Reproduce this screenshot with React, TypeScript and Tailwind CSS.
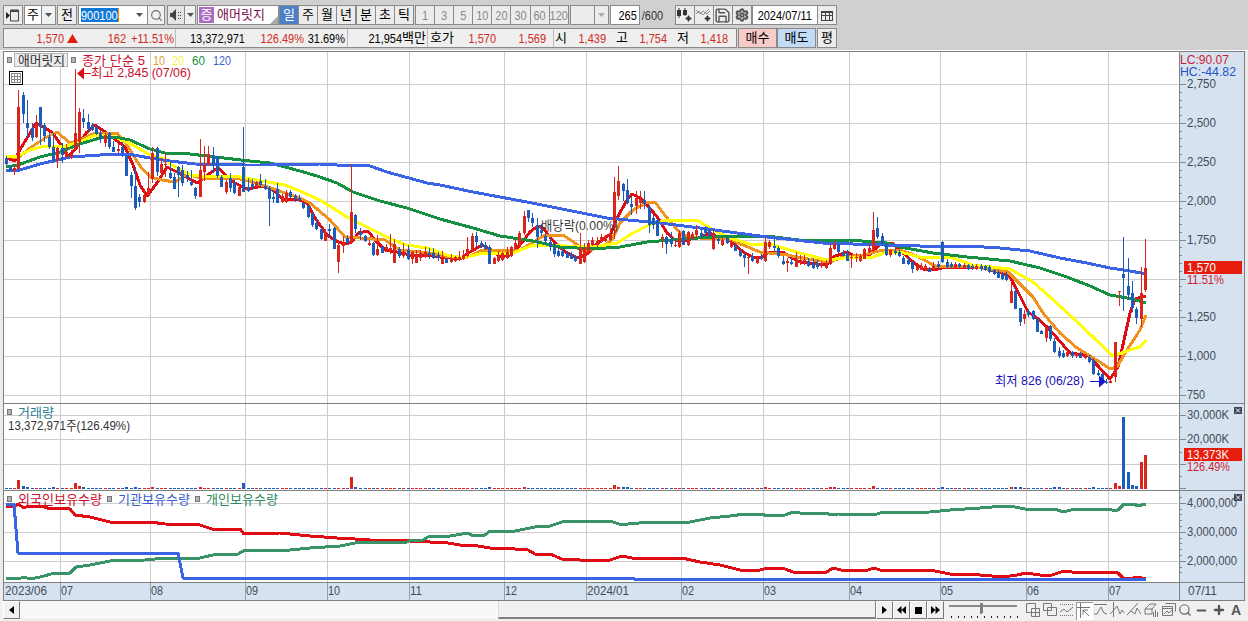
import type { ReactNode } from 'react';
import { Search, Save, Settings, Minus, Plus } from 'lucide-react';

// [x, high, bodyTop, bodyBottom, low]
type Candle = [number, number, number, number, number];

const RED = '#d8261c';
const BLUE = '#1c5cba';
const AXIS = '#434b57';

const up: Candle[] = [
  [14, 166, 168, 171, 175], [18, 90, 107, 169, 170], [36, 115, 125, 137, 138], [57, 147, 148, 161, 168],
  [66, 144, 152, 157, 158], [71, 150, 153, 157, 159], [75, 69, 133, 147, 150], [79, 108, 112, 142, 153],
  [105, 133, 135, 143, 147], [118, 144, 149, 151, 153], [144, 190, 195, 202, 203], [148, 172, 188, 196, 197],
  [152, 147, 153, 179, 183], [161, 158, 164, 173, 177], [165, 153, 164, 165, 177], [200, 139, 170, 197, 197],
  [204, 146, 165, 172, 181], [208, 146, 154, 165, 166], [226, 180, 182, 192, 194], [239, 185, 187, 196, 196],
  [256, 181, 182, 187, 188], [282, 194, 196, 202, 203], [286, 190, 193, 202, 203], [325, 229, 232, 241, 241],
  [338, 240, 245, 262, 273], [343, 236, 243, 246, 253], [351, 164, 212, 243, 243], [369, 240, 243, 245, 246],
  [377, 235, 249, 255, 256], [386, 244, 247, 250, 252], [390, 234, 248, 251, 254], [394, 239, 244, 263, 263],
  [403, 243, 254, 256, 258], [412, 251, 252, 259, 264], [416, 250, 255, 263, 263], [420, 250, 253, 258, 261],
  [425, 247, 252, 257, 258], [442, 251, 259, 264, 264], [451, 254, 258, 262, 263], [455, 256, 257, 261, 262],
  [459, 251, 257, 260, 261], [463, 250, 255, 259, 260], [467, 237, 249, 256, 257], [472, 233, 236, 250, 252],
  [494, 257, 258, 264, 264], [498, 251, 256, 261, 262], [502, 252, 253, 260, 261], [507, 247, 252, 258, 259],
  [511, 246, 247, 256, 257], [515, 239, 243, 249, 250], [519, 231, 233, 247, 248], [524, 211, 216, 233, 235],
  [580, 233, 248, 264, 264], [584, 243, 248, 262, 263], [588, 240, 243, 253, 254], [592, 237, 240, 245, 246],
  [597, 237, 241, 245, 247], [601, 234, 237, 242, 243], [605, 235, 236, 241, 242], [610, 230, 234, 240, 241],
  [614, 177, 192, 228, 239], [618, 166, 181, 196, 200], [636, 191, 198, 206, 214], [640, 191, 200, 203, 209],
  [662, 234, 237, 239, 248], [675, 240, 245, 246, 247], [679, 230, 233, 247, 248], [688, 231, 232, 245, 246],
  [692, 232, 234, 239, 240], [696, 225, 230, 235, 238], [713, 230, 233, 249, 250], [722, 238, 240, 245, 246],
  [731, 240, 242, 247, 248], [748, 255, 257, 258, 274], [757, 256, 258, 263, 264], [765, 237, 242, 261, 262],
  [769, 240, 242, 247, 249], [787, 258, 261, 263, 272], [796, 252, 259, 267, 267], [800, 255, 260, 263, 265],
  [804, 255, 260, 263, 265], [821, 262, 263, 266, 268], [826, 260, 263, 268, 269], [830, 244, 248, 264, 265],
  [834, 241, 244, 249, 250], [851, 255, 257, 258, 268], [856, 253, 257, 258, 262], [860, 254, 256, 261, 262],
  [864, 248, 249, 259, 259], [869, 244, 248, 252, 253], [873, 212, 230, 251, 252], [890, 249, 250, 255, 257],
  [917, 264, 266, 270, 271], [921, 263, 266, 270, 270], [925, 264, 266, 270, 271], [933, 262, 266, 269, 270],
  [955, 262, 264, 268, 269], [964, 263, 265, 268, 269], [976, 264, 266, 269, 270], [1011, 283, 291, 303, 303],
  [1024, 310, 314, 319, 324], [1046, 326, 328, 338, 342], [1067, 350, 352, 356, 357], [1076, 352, 354, 356, 358],
  [1085, 354, 355, 358, 359], [1110, 377, 381, 383, 383], [1115, 342, 342, 377, 382], [1119, 291, 291, 292, 306],
  [1141, 267, 293, 319, 327], [1145, 239, 268, 290, 292],
];

const down: Candle[] = [
  [6, 156, 158, 164, 165], [10, 165, 167, 171, 171], [23, 92, 95, 114, 123], [27, 100, 123, 128, 137],
  [32, 123, 128, 138, 141], [40, 107, 107, 127, 145], [44, 123, 125, 136, 142], [49, 133, 137, 147, 149],
  [53, 133, 147, 161, 163], [62, 143, 148, 155, 163], [83, 109, 118, 122, 128], [88, 114, 122, 129, 132],
  [92, 123, 125, 130, 131], [96, 126, 127, 134, 135], [100, 130, 133, 139, 143], [109, 132, 133, 147, 149],
  [113, 141, 147, 152, 152], [122, 142, 147, 153, 157], [126, 156, 156, 176, 176], [131, 172, 175, 186, 198],
  [135, 167, 186, 208, 210], [139, 194, 197, 202, 207], [157, 147, 148, 172, 176], [170, 163, 173, 178, 179],
  [174, 173, 177, 189, 189], [178, 166, 167, 175, 197], [182, 165, 170, 183, 186], [187, 171, 175, 178, 182],
  [191, 170, 182, 185, 186], [195, 187, 188, 196, 199], [213, 147, 155, 165, 173], [217, 156, 156, 176, 178],
  [221, 175, 177, 187, 187], [230, 173, 178, 188, 192], [234, 180, 183, 193, 194], [243, 127, 167, 192, 192],
  [248, 178, 187, 191, 192], [252, 179, 184, 187, 190], [260, 174, 181, 185, 187], [265, 179, 186, 189, 190],
  [269, 186, 188, 199, 226], [273, 190, 197, 199, 203], [277, 183, 189, 203, 203], [290, 190, 192, 197, 198],
  [295, 194, 196, 199, 202], [299, 195, 198, 200, 202], [303, 202, 203, 208, 209], [308, 204, 206, 217, 218],
  [312, 212, 214, 225, 227], [316, 217, 223, 229, 230], [321, 228, 229, 239, 240], [329, 224, 229, 231, 238],
  [334, 227, 228, 249, 249], [347, 235, 238, 243, 244], [355, 214, 215, 229, 233], [360, 228, 232, 235, 240],
  [365, 235, 236, 241, 242], [373, 242, 243, 255, 256], [382, 245, 247, 253, 253], [399, 247, 249, 256, 258],
  [408, 245, 250, 259, 260], [429, 248, 253, 255, 259], [433, 248, 253, 258, 259], [438, 252, 255, 258, 261],
  [446, 258, 259, 263, 263], [476, 232, 236, 242, 247], [481, 241, 243, 247, 248], [485, 242, 245, 249, 250],
  [489, 245, 247, 264, 264], [528, 210, 210, 218, 222], [532, 213, 218, 223, 227], [537, 218, 225, 237, 248],
  [541, 224, 230, 233, 236], [545, 233, 236, 241, 244], [550, 237, 242, 247, 251], [554, 243, 247, 254, 257],
  [558, 248, 251, 256, 257], [562, 248, 251, 256, 257], [567, 251, 253, 258, 258], [571, 252, 254, 259, 259],
  [575, 255, 256, 261, 262], [623, 183, 184, 191, 201], [627, 179, 190, 203, 204], [631, 196, 204, 207, 215],
  [644, 191, 200, 204, 209], [649, 205, 207, 225, 233], [653, 215, 218, 225, 229], [657, 219, 220, 236, 236],
  [666, 236, 237, 244, 254], [671, 232, 239, 244, 247], [683, 230, 231, 245, 245], [701, 228, 233, 237, 238],
  [705, 226, 229, 233, 236], [709, 229, 231, 236, 237], [718, 237, 239, 241, 244], [727, 236, 238, 243, 244],
  [735, 243, 246, 251, 251], [740, 249, 251, 256, 257], [744, 253, 255, 258, 267], [752, 253, 256, 261, 262],
  [761, 254, 257, 259, 260], [774, 239, 246, 248, 252], [778, 246, 248, 256, 258], [783, 256, 261, 264, 265],
  [791, 257, 262, 264, 265], [808, 258, 261, 266, 267], [813, 258, 263, 268, 269], [817, 260, 263, 267, 269],
  [838, 243, 244, 252, 253], [843, 250, 253, 256, 256], [847, 250, 253, 261, 261], [877, 217, 228, 237, 239],
  [882, 233, 236, 244, 245], [886, 243, 244, 255, 256], [895, 248, 251, 253, 255], [899, 250, 252, 256, 257],
  [903, 256, 258, 264, 264], [908, 257, 260, 264, 265], [912, 261, 262, 269, 273], [929, 267, 269, 272, 272],
  [938, 261, 264, 267, 269], [942, 241, 242, 262, 263], [947, 259, 262, 267, 269], [951, 262, 264, 267, 268],
  [959, 263, 264, 267, 268], [968, 264, 265, 269, 270], [972, 264, 266, 268, 270], [981, 264, 266, 269, 271],
  [985, 265, 266, 270, 271], [989, 265, 267, 272, 273], [994, 269, 270, 274, 275], [998, 270, 272, 278, 278],
  [1002, 272, 274, 279, 280], [1006, 272, 275, 280, 281], [1015, 288, 291, 309, 309], [1020, 308, 308, 322, 326],
  [1028, 309, 311, 315, 317], [1033, 310, 311, 319, 320], [1037, 318, 319, 332, 332], [1041, 330, 331, 334, 334],
  [1050, 325, 326, 339, 341], [1054, 338, 341, 352, 353], [1059, 347, 351, 356, 358], [1063, 350, 353, 357, 358],
  [1072, 351, 352, 356, 358], [1080, 352, 354, 358, 358], [1089, 355, 357, 362, 363], [1093, 358, 360, 374, 375],
  [1098, 370, 373, 375, 376], [1102, 373, 374, 383, 383], [1106, 379, 382, 383, 384], [1123, 237, 274, 278, 311],
  [1128, 258, 286, 295, 300], [1132, 281, 293, 308, 312], [1136, 307, 309, 318, 324],
];

const ma5 =
  '6,158 15,161 18,153 27,138 36,123 45,128 53,133 62,147 68,157 77,147 86,133 95,125 107,133 125,147 133,165 140,185 147,196 157,183 167,167 177,172 197,183 210,173 218,168 233,182 247,189 263,186 273,190 283,199 300,200 307,203 315,218 327,235 338,242 345,244 352,242 358,233 368,231 375,240 385,250 397,252 410,255 425,255 440,257 460,259 470,252 482,245 490,249 500,257 510,255 520,245 530,232 538,226 543,228 555,243 567,253 578,258 587,254 600,241 611,234 616,220 627,200 632,194 640,198 648,206 658,218 667,233 675,240 687,240 700,237 710,233 717,237 730,240 743,252 753,257 763,257 768,252 783,252 790,257 800,262 817,264 827,264 833,257 847,252 857,257 867,257 877,247 883,243 892,243 903,253 913,262 923,269 933,270 947,267 983,268 1003,273 1010,277 1017,290 1028,312 1037,318 1047,327 1057,338 1070,353 1090,356 1097,365 1110,379 1118,367 1130,313 1135,299 1146,296';
const ma10 =
  '6,156 18,158 30,148 45,138 57,132 70,143 80,140 95,133 117,133 127,145 140,166 150,177 162,180 175,182 187,174 200,178 235,178 245,180 265,186 285,193 300,198 310,203 330,220 345,237 360,238 385,240 400,250 430,253 450,257 468,257 482,250 500,251 520,250 535,241 545,235 563,235 575,243 583,251 600,248 612,240 620,223 633,210 648,202 655,202 667,218 682,235 700,238 727,238 743,245 760,252 787,255 813,260 830,262 843,257 863,255 883,250 900,250 917,256 937,267 967,266 1008,272 1033,297 1043,313 1060,333 1077,348 1100,362 1110,369 1117,367 1127,350 1140,330 1146,315';
const ma20 =
  '6,157 18,156 30,150 45,146 62,147 80,142 95,135 115,137 133,145 150,155 165,159 175,167 190,175 210,177 235,176 262,181 285,185 300,191 320,200 347,217 367,227 393,240 407,245 427,248 447,255 463,258 483,253 513,253 533,245 553,245 577,247 600,246 617,243 633,233 647,226 667,220 697,220 713,230 733,239 750,244 770,244 800,253 827,260 853,257 870,258 887,252 900,252 920,257 950,257 973,265 1010,269 1033,282 1050,297 1073,318 1093,337 1113,356 1130,350 1140,347 1146,340';
const ma60 =
  '6,167 18,165 40,157 60,152 80,144 100,138 115,137 130,140 150,149 165,153 190,154 215,157 250,161 270,163 285,167 300,171 317,176 337,183 353,192 380,201 407,208 440,219 473,228 500,236 533,241 560,247 593,249 620,247 647,242 683,239 727,236 767,236 807,241 850,240 887,243 900,247 933,253 967,257 1010,261 1040,268 1067,277 1090,286 1110,295 1133,299 1146,303';
const ma120 =
  '6,171 20,170 40,164 70,157 100,155 128,154 150,158 170,161 195,164 245,165 265,165 320,164 337,165 370,166 387,172 427,183 440,185 473,192 527,202 567,210 607,218 660,223 700,228 767,237 823,243 883,245 920,246 967,246 1000,248 1030,251 1060,258 1087,263 1110,268 1130,271 1146,274';

const foreign =
  '6,506 14,507 18,504 24,508 28,506 42,506 50,509 62,508 70,509 75,515 90,517 110,522 150,522 165,524 200,525 212,529 240,529 244,534 280,533 310,536 337,538 355,539 370,540 410,541 430,542 448,543 460,545 472,545 490,548 515,549 528,550 535,554 550,554 562,559 580,560 610,560 622,556 632,558 650,559 665,558 682,558 700,562 720,565 740,570 760,570 768,568 785,569 793,572 825,573 833,568 845,571 868,570 874,568 880,570 910,571 930,570 940,572 950,574 980,575 1003,577 1017,575 1026,573 1040,575 1052,575 1064,571 1080,573 1100,572 1118,573 1123,578 1130,579 1137,577 1146,579';
const personal =
  '6,578 15,578 18,579 24,577 30,579 40,577 55,573 70,573 76,567 90,565 110,561 145,560 165,558 200,558 213,555 225,554 238,554 245,550 260,550 280,551 310,548 340,546 360,542 407,542 411,540 423,540 428,537 450,536 468,533 473,536 485,535 490,531 515,531 535,527 550,526 562,522 580,521 610,521 622,525 628,524 650,522 665,523 690,522 710,518 730,516 745,514 762,514 767,516 785,515 793,512 800,513 827,513 830,515 838,514 874,515 880,513 930,512 950,510 980,508 1005,506 1015,507 1025,509 1055,509 1063,512 1075,509 1085,510 1095,509 1112,510 1118,510 1124,504 1135,504 1137,506 1146,504';
const institution = '6,504 14,504 18,553 178,553 183,578 633,578 634,579 1146,579';

// top of the volume bars that rise above the base line, keyed by x
const volumeTop: Record<number, number> = {
  18: 480, 23: 486, 27: 487, 53: 487, 75: 483, 79: 486, 83: 487, 126: 487, 135: 487, 152: 487, 200: 487,
  243: 483, 351: 477, 355: 487, 489: 487, 524: 487, 614: 485, 618: 487, 623: 487, 627: 487, 765: 487,
  830: 487, 834: 487, 873: 486, 942: 487, 1011: 487, 1015: 487, 1020: 487, 1054: 487, 1059: 487, 1093: 487,
  1115: 483, 1119: 486, 1123: 417, 1128: 472, 1132: 485, 1136: 486, 1141: 462, 1145: 455,
};

const months = [
  { x: 60, label: '07' }, { x: 150, label: '08' }, { x: 245, label: '09' }, { x: 327, label: '10' },
  { x: 409, label: '11' }, { x: 504, label: '12' }, { x: 586, label: '2024/01' }, { x: 681, label: '02' },
  { x: 763, label: '03' }, { x: 849, label: '04' }, { x: 940, label: '05' }, { x: 1026, label: '06' },
  { x: 1108, label: '07' },
];

const prices = [
  { y: 84, label: '2,750' }, { y: 123, label: '2,500' }, { y: 162, label: '2,250' }, { y: 201, label: '2,000' },
  { y: 240, label: '1,750' }, { y: 279, label: '' }, { y: 317, label: '1,250' }, { y: 356, label: '1,000' },
  { y: 395, label: '750' },
];

function Label({ x, y, w, fill = AXIS, children }: { x: number; y: number; w: number; fill?: string; children: string }) {
  return (
    <text x={x} y={y} fill={fill} fontSize="13" textLength={w} lengthAdjust="spacingAndGlyphs">
      {children}
    </text>
  );
}

// toolbar digits: 6px wide, stretched to the height of the hangul beside them
function Num({ children }: { children: string }) {
  return <span className="inline-block scale-y-[1.22] text-[11px]">{children}</span>;
}

function Grid({ top, bottom, rows }: { top: number; bottom: number; rows: number[] }) {
  return (
    <g stroke="#cdcdcd" shapeRendering="crispEdges">
      {rows.map((y) => <path key={y} d={`M4 ${y + 0.5}H1178`} />)}
      {months.map((m) => <path key={m.x} d={`M${m.x + 0.5} ${top}V${bottom}`} />)}
    </g>
  );
}

function Marker({ x, y }: { x: number; y: number }) {
  return <rect x={x + 0.5} y={y + 0.5} width="4" height="5" fill="#b5b5b5" stroke="#777" shapeRendering="crispEdges" />;
}

function Candles({ data, color }: { data: Candle[]; color: string }) {
  return (
    <g fill={color} shapeRendering="crispEdges">
      {data.map(([x, hi, top, bottom, lo]) => (
        <g key={x}>
          <rect x={x} y={hi} width="1" height={lo - hi} />
          <rect x={x - 1} y={top} width="3" height={bottom - top} />
        </g>
      ))}
    </g>
  );
}

function Line({ points, color }: { points: string; color: string }) {
  return <polyline points={points} fill="none" stroke={color} strokeWidth="3" strokeLinejoin="round" shapeRendering="crispEdges" />;
}

function CloseBox({ y }: { y: number }) {
  return (
    <g>
      <rect x="1234" y={y} width="8" height="7" fill="#3f4856" />
      <path d={`M1236 ${y + 1.5}l4 4m0-4l-4 4`} stroke="#fff" />
    </g>
  );
}

function Panel({ top, height, plot, axis }: { top: number; height: number; plot: ReactNode; axis: ReactNode }) {
  return (
    <div className="flex border-b border-[#808080]">
      <svg className="block shrink-0 bg-white" width="1175" height={height} viewBox={`4 ${top} 1175 ${height}`}>
        {plot}
      </svg>
      <div className="w-[65px] border-l border-[#808080] bg-[#d6e2ef]">
        <svg className="block" width="64" height={height} viewBox={`1180 ${top} 64 ${height}`}>
          {axis}
        </svg>
      </div>
    </div>
  );
}

function PricePanel() {
  const minor: number[] = [];
  for (let i = 0; i < 40; i++) minor.push(Math.round(84 + i * 7.78));
  return (
    <Panel
      top={52}
      height={351}
      plot={
        <>
          <Grid top={52} bottom={403} rows={prices.map((p) => p.y)} />
          <Line points={ma5} color="#e00c14" />
          <Line points={ma10} color="#f0921c" />
          <Line points={ma20} color="#ffff00" />
          <Line points={ma60} color="#159040" />
          <Line points={ma120} color="#3a64e4" />
          <Candles data={up} color={RED} />
          <Candles data={down} color={BLUE} />

          <Marker x={7} y={57} />
          <rect x="14.5" y="53.5" width="53" height="13" fill="#ececec" stroke="#b4b4b4" shapeRendering="crispEdges" />
          <Label x={18} y={65} w={47} fill="#333">애머릿지</Label>
          <Marker x={71} y={57} />
          <Label x={82} y={65} w={63} fill="#c8102e">종가 단순 5</Label>
          <Label x={153} y={65} w={12} fill="#e0a030">10</Label>
          <Label x={172} y={65} w={12} fill="#f5f53c">20</Label>
          <Label x={192} y={65} w={13} fill="#159040">60</Label>
          <Label x={213} y={65} w={18} fill="#3a5fcc">120</Label>
          <path d="M77 73.5l7-6v12z" fill="#e00c14" />
          <path d="M83 73.5h8" stroke="#e00c14" />
          <Label x={91} y={77} w={100} fill="#c8102e">최고 2,845 (07/06)</Label>
          <g shapeRendering="crispEdges" fill="none">
            <rect x="9.5" y="71.5" width="13" height="13" fill="#fff" stroke="#000" />
            <path d="M11.5 73.5h9v9h-9zM11.5 76.5h9M11.5 79.5h9M14.5 73.5v9M17.5 73.5v9" stroke="#8a8a8a" />
          </g>
          <Label x={541} y={230} w={77} fill="#3c3c3c">배당락(0.00%)</Label>
          <Label x={995} y={385} w={89} fill="#1a12b8">최저 826 (06/28)</Label>
          <path d="M1090 381.5h10" stroke="#1a12d8" />
          <path d="M1106 381.5l-7-6v12z" fill="#1a12d8" />
        </>
      }
      axis={
        <>
          <g stroke="#808890" shapeRendering="crispEdges">
            {minor.map((y) => <path key={y} d={`M1180 ${y + 0.5}h2`} />)}
            {prices.map((p) => <path key={p.y} d={`M1180 ${p.y + 0.5}h6`} />)}
          </g>
          <Label x={1180} y={64} w={49} fill="#d01c30">LC:90.07</Label>
          <Label x={1180} y={76} w={56} fill="#2454c8">HC:-44.82</Label>
          {prices.filter((p) => p.label).map((p) => (
            <Label key={p.y} x={1187} y={p.y + 4} w={p.label === '750' ? 18 : 29}>{p.label}</Label>
          ))}
          <rect x="1184" y="261" width="58" height="13" fill="#e81c0c" />
          <Label x={1187} y={272} w={29} fill="#fff">1,570</Label>
          <Label x={1187} y={284} w={37} fill="#d01c30">11.51%</Label>
        </>
      }
    />
  );
}

function VolumePanel() {
  const bars = [...up.map((c) => ({ x: c[0], fill: RED })), ...down.map((c) => ({ x: c[0], fill: BLUE }))];
  return (
    <Panel
      top={404}
      height={86}
      plot={
        <>
          <Grid top={404} bottom={490} rows={[415, 439, 464]} />
          <g shapeRendering="crispEdges">
            {bars.map((b) => {
              const y = volumeTop[b.x] ?? 488;
              return <rect key={b.x} x={b.x - 1} y={y} width="3" height={489 - y} fill={b.fill} />;
            })}
          </g>
          <Marker x={7} y={409} />
          <Label x={18} y={417} w={36} fill="#2a8090">거래량</Label>
          <Label x={8} y={430} w={122} fill="#333">13,372,971주(126.49%)</Label>
        </>
      }
      axis={
        <>
          <g stroke="#808890" shapeRendering="crispEdges">
            <path d="M1180 415.5h6M1180 439.5h6M1180 464.5h6M1180 488.5h6M1180 427.5h2M1180 452.5h2M1180 476.5h2" />
          </g>
          <Label x={1187} y={419} w={42}>30,000K</Label>
          <Label x={1187} y={443} w={42}>20,000K</Label>
          <rect x="1184" y="448" width="58" height="13" fill="#e81c0c" />
          <Label x={1187} y={459} w={42} fill="#fff">13,373K</Label>
          <Label x={1187} y={471} w={43} fill="#d01c30">126.49%</Label>
          <CloseBox y={407} />
        </>
      }
    />
  );
}

function HoldingsPanel() {
  const minor: number[] = [];
  for (let y = 497; y < 578; y += 5.8) minor.push(Math.round(y));
  return (
    <Panel
      top={491}
      height={91}
      plot={
        <>
          <Grid top={491} bottom={582} rows={[503, 532, 561]} />
          <Marker x={7} y={496} />
          <Label x={18} y={504} w={84} fill="#c8102e">외국인보유수량</Label>
          <Marker x={107} y={496} />
          <Label x={118} y={504} w={72} fill="#3a5fcc">기관보유수량</Label>
          <Marker x={195} y={496} />
          <Label x={206} y={504} w={72} fill="#2f8a60">개인보유수량</Label>
          <Line points={foreign} color="#e00c14" />
          <Line points={personal} color="#3a9468" />
          <Line points={institution} color="#3a64e4" />
        </>
      }
      axis={
        <>
          <g stroke="#808890" shapeRendering="crispEdges">
            {minor.map((y) => <path key={y} d={`M1180 ${y + 0.5}h2`} />)}
            <path d="M1180 503.5h6M1180 532.5h6M1180 561.5h6" />
          </g>
          <Label x={1187} y={507} w={50}>4,000,000</Label>
          <Label x={1187} y={536} w={50}>3,000,000</Label>
          <Label x={1187} y={565} w={50}>2,000,000</Label>
          <CloseBox y={494} />
        </>
      }
    />
  );
}

function DateAxis() {
  return (
    <svg className="block bg-[#d6e2ef]" width="1240" height="17" viewBox="4 583 1240 17">
      <Label x={5} y={595} w={42}>2023/06</Label>
      {months.map((m) => (
        <g key={m.x}>
          <path d={`M${m.x + 0.5} 583v17`} stroke="#9a9fa8" shapeRendering="crispEdges" />
          <Label x={m.x + 1} y={595} w={m.label.length > 2 ? 42 : 12}>{m.label}</Label>
        </g>
      ))}
      <path d="M1179.5 583v17" stroke="#808080" shapeRendering="crispEdges" />
      <Label x={1188} y={595} w={29}>07/11</Label>
    </svg>
  );
}

const box = 'flex h-5 shrink-0 items-center justify-center border border-[#8a8a8a]';

function Caret({ color = '#555' }: { color?: string }) {
  return <svg className="shrink-0" width="7" height="4" viewBox="0 0 7 4"><path d="M0 0h7L3.5 4z" fill={color} /></svg>;
}

function Toolbar() {
  return (
    <div className="flex h-5 pl-[3px] text-[13px] leading-[18px] text-black">
      <div className={`${box} w-5 bg-[#ececec]`}>
        <svg width="14" height="13" viewBox="0 0 14 13" fill="none" stroke="#444">
          <path d="M4.500 1v11h8v-11z" /><path d="M4 2h9" strokeWidth="2" /><path d="M0 3l4 3.500-4 3.500z" fill="#222" stroke="none" />
        </svg>
      </div>
      <div className={`${box} ml-px w-[18px] bg-white`}>주</div>
      <div className={`${box} -ml-px w-[15px] bg-[#f0f0f0]`}><Caret /></div>
      <div className={`${box} ml-px w-5 bg-[#ececec]`}>전</div>
      <div className={`${box} ml-px w-[70px] !justify-between bg-white pr-1 pl-0.5`}>
        <span className="flex h-[14px] w-[38px] items-center border-r border-orange-400 bg-[#0f78d4] text-white"><Num>900100</Num></span>
        <Caret />
      </div>
      <div className={`${box} -ml-px w-[18px] bg-[#f0f0f0]`}><Search size={13} color="#666" /></div>
      <div className={`${box} ml-0.5 w-[18px] bg-[#e4e4e4]`}>
        <svg width="13" height="12" viewBox="0 0 13 12" fill="#444">
          <path d="M0 4h2l4-4v12L2 8H0z" /><path d="M8 3h1v1H8zM8 6h1v1H8zM8 9h1v1H8zM10 3h1v1h-1zM10 6h1v1h-1zM10 9h1v1h-1z" />
        </svg>
      </div>
      <div className={`${box} -ml-px w-3 bg-[#f0f0f0]`}><Caret /></div>
      <div className={`${box} relative ml-px w-[82px] !justify-start bg-white pl-px`}>
        <span className="h-4 w-[15px] bg-[#ad6cc4] text-center leading-4 text-white">증</span>
        <span className="ml-[3px] text-[#7a1050]">애머릿지</span>
        <svg className="absolute right-0 bottom-0" width="8" height="8"><path d="M8 0v8H0z" fill="#aaa" /></svg>
      </div>
      <div className={`${box} w-5 bg-[#4b7fc8] text-white`}>일</div>
      {['주', '월', '년'].map((t) => <div key={t} className={`${box} -ml-px w-5 bg-[#ececec]`}>{t}</div>)}
      <div className={`${box} w-5 bg-[#ececec]`}>분</div>
      {['초', '틱'].map((t) => <div key={t} className={`${box} -ml-px w-5 bg-[#ececec]`}>{t}</div>)}
      <div className="ml-px flex">
        {['1', '3', '5', '10', '20', '30', '60', '120'].map((t) => (
          <div key={t} className={`${box} -mr-px w-[20.100px] bg-[#ececec] text-[#888]`}><Num>{t}</Num></div>
        ))}
      </div>
      <div className={`${box} ml-0.5 w-[25px] bg-[#ececec]`} />
      <div className={`${box} -ml-px w-[15px] bg-[#ececec]`}><Caret color="#aaa" /></div>
      <div className={`${box} ml-px w-[30px] !justify-end bg-white pr-0.5`}><Num>265</Num></div>
      <div className="w-[35px] pl-0.5 leading-5 text-[#333]"><Num>/600</Num></div>
      <div className={`${box} w-5 bg-[#ececec]`}>
        <svg width="15" height="14" viewBox="0 0 15 14" fill="#333">
          <path d="M0 2h4v6H0zM1.500 0h1v10h-1zM6 2h4v5H6zM7.500 0h1v8h-1z" /><path d="M9 10h2V8h1v2h2v1h-2v2h-1v-2H9z" stroke="#333" />
        </svg>
      </div>
      <div className={`${box} -ml-px w-5 bg-[#ececec]`}>
        <svg width="15" height="14" viewBox="0 0 15 14" fill="none" stroke="#777">
          <path d="M0 6l3-3 4 4 6-6M0 2l4 4 3-3 4 3 3-3" strokeWidth=".8" /><path d="M9 10h2V8h1v2h2v1h-2v2h-1v-2H9z" fill="#333" stroke="#333" />
        </svg>
      </div>
      <div className={`${box} -ml-px w-5 bg-[#ececec]`}>
        <Save size={17} color="#555" strokeWidth={2} />
      </div>
      <div className={`${box} -ml-px w-5 bg-[#ececec]`}><Settings size={14} color="#555" strokeWidth={3.5} /></div>
      <div className={`${box} w-[66px] bg-white`}><Num>2024/07/11</Num></div>
      <div className={`${box} -ml-px w-5 bg-[#ececec]`}>
        <svg width="12" height="11" viewBox="0 0 12 11" fill="none" stroke="#444" shapeRendering="crispEdges">
          <path d="M.5 1.500h11v9H.5zM.5 5.500h11M4.500 2v8M8.500 2v8" /><path d="M0 2h12" strokeWidth="2" />
        </svg>
      </div>
    </div>
  );
}

function QuoteBar() {
  const num = 'shrink-0 text-right';
  return (
    <div className="mt-[3px] flex h-5 pl-[3px] text-[13px] leading-[18px] text-black">
      <div className="flex w-[734px] shrink-0 border border-[#8a8a8a] bg-[#efefef]">
        <div className="flex w-[172px] shrink-0 items-center border-r border-[#bbb] text-[#d02a24]">
          <span className={`${num} w-[60px]`}><Num>1,570</Num></span>
          <svg className="ml-[3px]" width="11" height="9"><path d="M5.500 0L11 9H0z" fill="#e0200c" /></svg>
          <span className={`${num} w-[48px]`}><Num>162</Num></span>
          <span className={`${num} w-[48px]`}><Num>+11.51%</Num></span>
        </div>
        <div className="flex w-[172px] shrink-0 border-r border-[#bbb]">
          <span className={`${num} w-[69px]`}><Num>13,372,971</Num></span>
          <span className={`${num} w-[59px] text-[#d02a24]`}><Num>126.49%</Num></span>
          <span className={`${num} w-[41px]`}><Num>31.69%</Num></span>
        </div>
        <div className={`${num} w-[80px] border-r border-[#bbb] pr-px`}><Num>21,954</Num>백만</div>
        <div className="flex w-[126px] shrink-0 border-r border-[#bbb] text-[#d02a24]">
          <span className="w-[26px] pl-[2px] text-black">호가</span>
          <span className={`${num} w-[42px]`}><Num>1,570</Num></span>
          <span className={`${num} w-[50px]`}><Num>1,569</Num></span>
        </div>
        <div className="flex shrink-0 text-[#d02a24]">
          <span className="w-[14px] pl-px text-black">시</span>
          <span className={`${num} w-[38px]`}><Num>1,439</Num></span>
          <span className={`${num} w-[22px] text-black`}>고</span>
          <span className={`${num} w-[39px]`}><Num>1,754</Num></span>
          <span className={`${num} w-[22px] text-black`}>저</span>
          <span className={`${num} w-[39px]`}><Num>1,418</Num></span>
        </div>
      </div>
      <div className={`${box} ml-px w-[39px] bg-[#f7cbc7]`}>매수</div>
      <div className={`${box} w-[39px] bg-[#c3dbf5]`}>매도</div>
      <div className={`${box} ml-px w-5 bg-[#ececec]`}>평</div>
    </div>
  );
}

const tools = [
  'M1.500 1.500h9v9h-9zM6.500 6.500h8v8h-8zM10.500 6.500v8M6.500 10.500h8',
  'M1.500 1.500h8v7h-8zM5.500 5.500h9v8h-9z',
  'M1 10l4-3 3 3 6-5',
  'M3.500 0v15M0 4.500h13M12 13L6 7M6 12V7h5',
  'M1 2.500h13M1 12h3l4-7 3 6 3 1',
  'M3.500 0v15M0 12l3-3 4-5 3 8 2-4 2 3',
  'M1 12L11 1M0 13l4-4 4 3 2-6 4 6',
  'M1 7l5-5h6l-4 5v5H1zM9.500 10v5M11.500 8v7M13.500 10v5M1 7h7',
  'M4.500 1.500h10v8M1.500 4.500h10v9h-10zM1.500 6.500h10M3 12l3-3 2 2 3-3',
];

function BottomBar() {
  const btn = 'flex h-[18px] w-[17px] shrink-0 items-center justify-center border border-white border-r-[#777] border-b-[#777] bg-[#f0f0f0]';
  return (
    <div className="flex h-5 bg-[#f0f0f0] pl-[3px]">
      <div className={btn}><svg width="5" height="8"><path d="M5 0v8L0 4z" /></svg></div>
      <div className="h-[17px] w-[478px] bg-[#f8f8f8]" />
      <div className="h-[18px] w-[378px] border-r border-b-2 border-l border-[#808080] border-l-[#ddd] bg-[#f0f0f0]" />
      <div className={btn}><svg width="5" height="8"><path d="M0 0v8l5-4z" /></svg></div>
      <div className={btn}><svg width="9" height="8"><path d="M4.500 0v8L0 4zM9 0v8L4.500 4z" /></svg></div>
      <div className={btn}><svg width="7" height="7"><path d="M0 0h7v7H0z" /></svg></div>
      <div className={btn}><svg width="9" height="8"><path d="M0 0v8l4.500-4zM4.500 0v8L9 4z" /></svg></div>
      <svg className="ml-[5px] shrink-0" width="70" height="20" shapeRendering="crispEdges">
        <path d="M0 5h68" stroke="#8a8a8a" strokeWidth="2" />
        <path d="M31 2h3v9l-2 2h-1z" fill="#808080" />
        {Array.from({ length: 11 }, (_, i) => <path key={i} d={`M${Math.round(2 + i * 6.6)}.5 15v2`} stroke="#222" />)}
      </svg>
      <div className="ml-1.5 flex items-start pt-px">
        {tools.map((d, i) => (
          <div key={i} className={i === 3 ? 'h-[18px] w-[17px] border-t border-l border-[#999] bg-white' : 'h-[18px] w-[17px]'}>
            <svg width="16" height="16" viewBox="0 0 16 16" fill="none" stroke="#777">
              <path d={d} />
              {i === 2 && <path d="M1 2.500h13M1 13.500h13" strokeDasharray="1 1" />}
            </svg>
          </div>
        ))}
        <div className="flex h-4 w-[17px] items-center"><Search size={14} color="#666" /></div>
        <div className="flex h-4 w-[17px] items-center"><Minus size={13} color="#555" strokeWidth={4} /></div>
        <div className="flex h-4 w-[17px] items-center"><Plus size={14} color="#555" strokeWidth={4} /></div>
        <div className="w-[14px] text-center text-[14px] leading-[17px] font-bold text-[#555]">A</div>
      </div>
    </div>
  );
}

export default function App() {
  return (
    <div className="h-[621px] w-[1248px] overflow-hidden bg-[#d0d0d0] pt-[5px] font-[family-name:'Liberation_Sans','Noto_Sans_CJK_KR',sans-serif] whitespace-nowrap">
      <Toolbar />
      <QuoteBar />
      <div className="mt-[2px] border-t border-white bg-[#ebebeb]">
        <div className="ml-[3px] w-[1242px] border border-[#808080]">
          <PricePanel />
          <VolumePanel />
          <HoldingsPanel />
          <DateAxis />
        </div>
        <BottomBar />
      </div>
    </div>
  );
}
